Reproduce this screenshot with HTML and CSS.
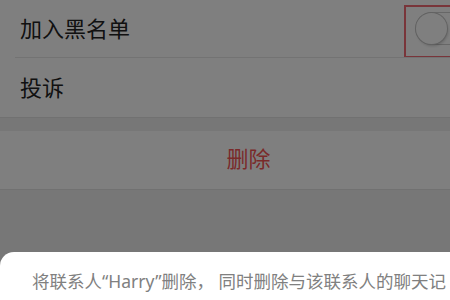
FILE: index.html
```html
<!DOCTYPE html>
<html>

<head lang="zh">
    <meta charset="UTF-8">
    <title>删除联系人</title>
    <link rel="stylesheet" href="styles.css">
</head>

<body>
    <div class="group">
        <div class="row first">
            <span class="label">加入黑名单</span>
            <span class="switch"><i></i></span>
            <span class="mark"></span>
        </div>
        <div class="row">
            <span class="label">投诉</span>
        </div>
    </div>
    <div class="group del">
        <div class="row center">删除</div>
    </div>

    <!--遮罩 + 底部弹出-->
    <div class="mask">
        <div class="sheet">
            <p class="tip">将联系人“Harry”删除， 同时删除与该联系人的聊天记</p>
        </div>
    </div>
</body>

</html>
```

FILE: styles.css
```css
* {
    margin: 0;
    padding: 0;
}

html,
body {
    height: 100%;
    overflow: hidden;
}

body {
    background-color: #efefef;
    font-family: "Noto Sans CJK SC", "Noto Sans", sans-serif;
    color: #333;
}

.group {
    background-color: #fff;
    border-bottom: 1px solid #e2e2e2;
}

.del {
    margin-top: 13px;
}

.row {
    position: relative;
    display: flex;
    align-items: center;
    justify-content: space-between;
    box-sizing: border-box;
    height: 58px;
    padding-left: 20px;
    padding-bottom: 4px;
    font-size: 22px;
}

.row.first::after {
    content: "";
    position: absolute;
    left: 15px;
    right: 0;
    bottom: 0;
    border-bottom: 1px solid #e6e6e6;
}

.row.first {
    margin-bottom: 1px;
}

.label {
    color: #222;
}

.center {
    justify-content: center;
    padding-left: 47px;
    padding-bottom: 6px;
    color: #f55454;
}

.switch {
    position: relative;
    width: 56px;
    height: 31px;
    margin-right: -23px;
    margin-top: 2px;
    border: 1px solid #cfcfcf;
    border-radius: 17px;
    background-color: #fff;
}

.switch i {
    position: absolute;
    left: 0;
    top: 0;
    width: 31px;
    height: 31px;
    border-radius: 50%;
    background-color: #fff;
    box-shadow: 0 0 0 1px #c4c4c4, 1px 2px 3px rgba(0, 0, 0, .2);
}

.mark {
    position: absolute;
    left: 404px;
    top: 5px;
    width: 60px;
    height: 49px;
    border: 2px solid #f26a74;
}

.mask {
    position: fixed;
    left: 0;
    top: 0;
    right: 0;
    bottom: 0;
    padding-top: 252px;
    background-color: rgba(0, 0, 0, .5);
}

.sheet {
    height: 200px;
    background-color: #fff;
    border-radius: 14px 0 0 0;
}

.tip {
    padding: 16px 0 0 32px;
    font-family: "Noto Sans", "Noto Sans CJK SC", sans-serif;
    font-size: 17.5px;
    line-height: 26px;
    color: #808080;
    white-space: nowrap;
}
```
